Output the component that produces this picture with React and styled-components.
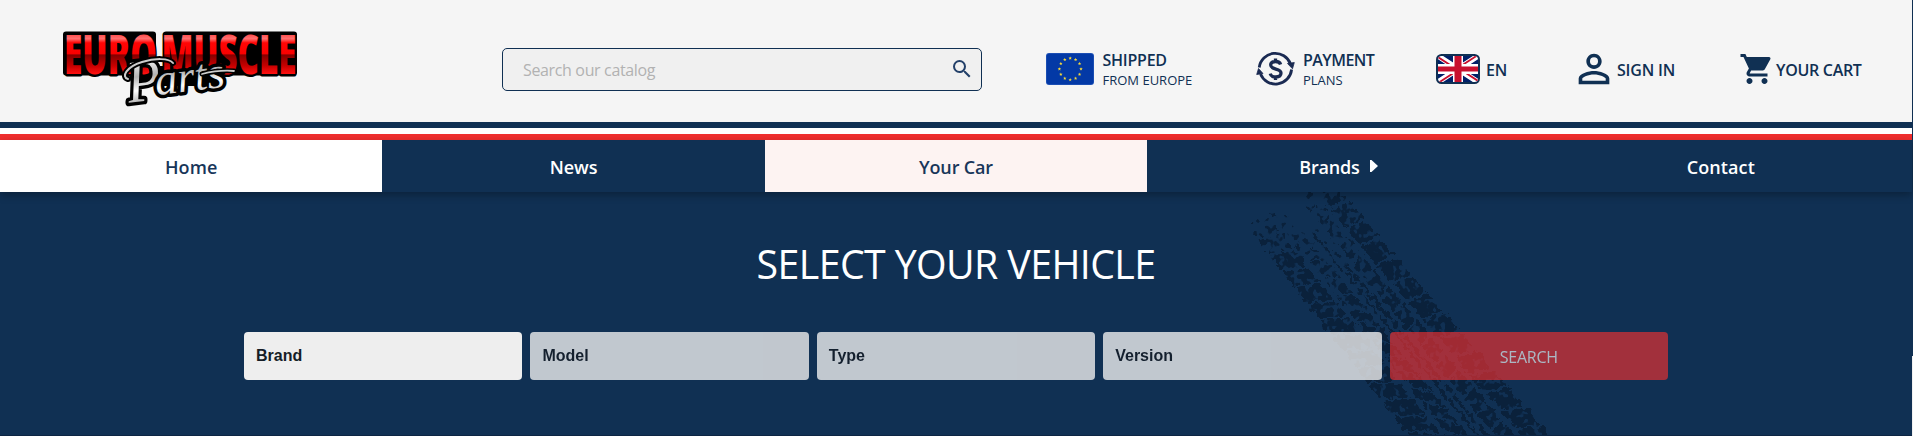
import React from 'react';
import styled, { createGlobalStyle } from 'styled-components';
import { MdSearch, MdPersonOutline, MdShoppingCart } from 'react-icons/md';

const NAVY = '#103053';
const SANS = '"Open Sans", "Noto Sans", sans-serif';

const Global = createGlobalStyle`
  * { box-sizing: border-box; }
  body { margin: 0; background: ${NAVY}; font-family: ${SANS}; overflow: hidden; }
`;

const Screen = styled.div`
  display: flex;
  width: 1913px;
  height: 436px;
`;
const Page = styled.div`
  width: 1912px;
  display: flex;
  flex-direction: column;
`;
const ScrollRail = styled.div`
  width: 1px;
  background: linear-gradient(${NAVY} 356px, #f0f0f0 356px);
`;

const Header = styled.header`
  height: 122px;
  padding-top: 16px;
  background: #f5f5f5;
  display: flex;
  align-items: center;
`;
const Logo = styled.svg`
  width: 240px;
  height: 84px;
  margin-left: 60px;
`;
const LogoWord = styled.text`
  font: 800 54px "Open Sans", sans-serif;
  fill: url(#red);
  stroke: #000;
  stroke-width: 5px;
  stroke-linejoin: round;
  paint-order: stroke;
`;
const LogoScript = styled.text`
  font: italic 400 ${p => p.$size}px "Liberation Serif", serif;
  fill: url(#silver);
  stroke: #000;
  stroke-width: 7px;
  stroke-linejoin: round;
  paint-order: stroke;
`;
const SearchBox = styled.label`
  width: 480px;
  height: 43px;
  margin: 1px 64px 0 202px;
  padding: 0 7px 0 20px;
  border: 1px solid ${NAVY};
  border-radius: 5px;
  background: #f0f0f0;
  color: #234069;
  display: flex;
  align-items: center;
  svg { margin-top: -2px; }
`;
const SearchInput = styled.input`
  flex: 1;
  padding: 0;
  border: 0;
  outline: 0;
  background: none;
  font: 400 16px/22px ${SANS};
  letter-spacing: -0.35px;
  &::placeholder { color: #b2b2b2; opacity: 1; }
`;
const HeaderItem = styled.div`
  display: flex;
  align-items: center;
  width: ${p => p.$width}px;
  gap: ${p => p.$gap}px;
  color: ${NAVY};
  flex: none;
`;
const Lines = styled.div`
  display: flex;
  flex-direction: column;
  padding-top: 1px;
`;
const Strong = styled.span`
  padding-top: ${p => p.$drop || 0}px;
  font-size: 16px;
  line-height: 21px;
  font-weight: 600;
  letter-spacing: ${p => p.$track || 0}px;
  white-space: nowrap;
`;
const Small = styled.span`
  font-size: 13px;
  line-height: 19px;
  letter-spacing: ${p => p.$track || 0}px;
  white-space: nowrap;
`;

const Stripe = styled.div`
  height: 6px;
  background: ${p => p.$color};
`;
const Nav = styled.nav`
  height: 52px;
  display: grid;
  grid-template-columns: repeat(5, 1fr);
  background: ${NAVY};
  position: relative;
  z-index: 1;
  box-shadow: 0 3px 8px rgba(0, 0, 0, 0.3);
`;
const NavLink = styled.a`
  display: flex;
  align-items: center;
  justify-content: center;
  gap: 10px;
  padding-top: 1px;
  font-size: 18px;
  font-weight: 600;
  letter-spacing: ${p => p.$track}px;
  color: ${p => (p.$bg ? '#183659' : '#fff')};
  background: ${p => p.$bg || 'transparent'};
  svg { margin-top: -2px; }
`;

const Hero = styled.section`
  position: relative;
  flex: 1;
  display: flex;
  flex-direction: column;
  align-items: center;
  overflow: hidden;
  background: ${NAVY};
  border-bottom: 1px solid #0d2543;
`;
const TreadArt = styled.svg`
  position: absolute;
  left: 1220px;
  top: 0;
  width: 380px;
  height: 244px;
`;
const Title = styled.h1`
  position: relative;
  margin: 45px 0 41px;
  font-size: 39.3px;
  line-height: 54px;
  font-weight: 400;
  letter-spacing: -0.6px;
  color: #fff;
`;
const VehicleForm = styled.form`
  position: relative;
  width: 1424px;
  display: grid;
  grid-template-columns: repeat(5, 1fr);
  gap: 8px;
`;
const Select = styled.div`
  height: 48px;
  padding-left: 12px;
  border-radius: 4px;
  background: #eee;
  color: #161d26;
  opacity: ${p => (p.$disabled ? 0.8 : 1)};
  display: flex;
  align-items: center;
  font: 700 16px "Liberation Sans", Arial, sans-serif;
`;
const SearchButton = styled.button`
  height: 48px;
  padding: 2px 0 0;
  border: 0;
  border-radius: 4px;
  background: #f03030;
  color: #fff;
  opacity: 0.65;
  font: 400 16px ${SANS};
  letter-spacing: -0.25px;
`;

function BrandLogo() {
  return (
    <Logo viewBox="60 27 240 84" role="img">
      <defs>
        <linearGradient id="red" gradientUnits="userSpaceOnUse" x1="0" y1="33" x2="0" y2="74">
          <stop offset="0" stopColor="#ff4040" />
          <stop offset="0.14" stopColor="#ff7070" />
          <stop offset="0.24" stopColor="#ff0505" />
          <stop offset="0.5" stopColor="#fa0000" />
          <stop offset="0.54" stopColor="#850000" />
          <stop offset="0.8" stopColor="#c80000" />
          <stop offset="1" stopColor="#ff1010" />
        </linearGradient>
        <linearGradient id="silver" gradientUnits="userSpaceOnUse" x1="0" y1="60" x2="0" y2="106">
          <stop offset="0" stopColor="#fff" />
          <stop offset="0.4" stopColor="#b4b4b4" />
          <stop offset="0.7" stopColor="#fff" />
          <stop offset="1" stopColor="#aaa" />
        </linearGradient>
      </defs>
      <rect x="63" y="31.500" width="93" height="44" rx="3" />
      <rect x="163" y="31.500" width="134" height="44" rx="3" />
      <rect x="130" y="66" width="90" height="20" rx="8" />
      <LogoWord x="64" y="73.500" textLength="93" lengthAdjust="spacingAndGlyphs">EURO</LogoWord>
      <LogoWord x="161.500" y="73.500" textLength="135" lengthAdjust="spacingAndGlyphs">MUSCLE</LogoWord>
      <g transform="rotate(-7 126 102)">
        <LogoScript $size={60} x="129" y="103" textLength="34" lengthAdjust="spacingAndGlyphs">P</LogoScript>
        <LogoScript $size={44} x="157" y="99" textLength="70" lengthAdjust="spacingAndGlyphs">arts</LogoScript>
      </g>
      <path d="M128 79c-7-2-2-12 14-17 13-4 27-4 31 1" fill="none" stroke="#000" strokeWidth="6" strokeLinecap="round" />
      <path d="M128 79c-7-2-2-12 14-17 13-4 27-4 31 1" fill="none" stroke="#ccc" strokeWidth="2" strokeLinecap="round" />
      <path d="M202 74c8-2 20-4 32-3" fill="none" stroke="#000" strokeWidth="5" strokeLinecap="round" />
      <path d="M202 74c8-2 20-4 32-3" fill="none" stroke="#ccc" strokeWidth="1.800" strokeLinecap="round" />
    </Logo>
  );
}

function EuFlag() {
  const stars = Array.from({ length: 12 }, (_, i) => {
    const a = (i * Math.PI) / 6;
    const cx = 24.2 + 10.8 * Math.sin(a);
    const cy = 16 - 10.8 * Math.cos(a);
    return Array.from({ length: 10 }, (_, k) => {
      const r = k % 2 ? 0.8 : 1.8;
      const b = (k * Math.PI) / 5;
      return `${(cx + r * Math.sin(b)).toFixed(2)},${(cy - r * Math.cos(b)).toFixed(2)}`;
    }).join(' ');
  });
  return (
    <svg width="48" height="32" viewBox="0 0 48 32">
      <rect width="48" height="32" rx="3" fill="#2456b8" />
      <rect x="0.700" y="0.700" width="46.600" height="30.600" rx="2.500" fill="#0339a6" />
      {stars.map((pts, i) => <polygon key={i} points={pts} fill="#f5d93a" />)}
    </svg>
  );
}

function UkFlag() {
  return (
    <svg width="44" height="30" viewBox="0 0 44 30">
      <defs>
        <clipPath id="ukFrame"><rect x="2" y="2" width="40" height="26" rx="3.500" /></clipPath>
        <clipPath id="ukRed"><path d="M22 15h20v13zM22 15v13H2zM22 15H2V2zM22 15V2h20z" /></clipPath>
      </defs>
      <rect width="44" height="30" rx="5.500" fill={NAVY} />
      <g clipPath="url(#ukFrame)">
        <rect x="2" y="2" width="40" height="26" fill="#012169" />
        <path d="M2 2l40 26M42 2L2 28" stroke="#fff" strokeWidth="5.600" />
        <path d="M2 2l40 26M42 2L2 28" clipPath="url(#ukRed)" stroke="#c8102e" strokeWidth="3.600" />
        <path d="M22 2v26M2 15h40" stroke="#fff" strokeWidth="10" />
        <path d="M22 2v26" stroke="#c8102e" strokeWidth="7" />
        <path d="M2 15h40" stroke="#c8102e" strokeWidth="4.800" />
      </g>
    </svg>
  );
}

function PaymentIcon() {
  return (
    <svg width="39" height="36" viewBox="0 0 39 36" fill="none" stroke="#1a2a52">
      <path d="M3.200 16.500A16.200 16.200 0 0 1 34.500 13" strokeWidth="2.800" />
      <path d="M35.600 18.500A16.200 16.200 0 0 1 4.500 23" strokeWidth="2.800" />
      <path d="M31.500 12.500l6.800-1-1.800 6.300zM7 22.500l-6.300 1 1.800-6z" fill="#1a2a52" strokeWidth="0.800" />
      <path d="M24.600 13.500c-.6-2-2.300-3-5-3-3 0-4.900 1.300-4.900 3.600 0 5.300 10.300 2.600 10.300 8 0 2.500-2.100 3.900-5.200 3.900-3 0-5-1.200-5.600-3.400M19.500 7.500v3M19.500 26v3" strokeWidth="3.300" />
    </svg>
  );
}

/* Tyre track: tapered bands of blocks, worn away by noise towards the top. */
const L0 = [25, 32], L1 = [198, 256], R0 = [114, -8], R1 = [341, 256];
const point = (t, v) => {
  const lx = L0[0] + (L1[0] - L0[0]) * t, ly = L0[1] + (L1[1] - L0[1]) * t;
  const rx = R0[0] + (R1[0] - R0[0]) * t, ry = R0[1] + (R1[1] - R0[1]) * t;
  return `${(lx + (rx - lx) * v).toFixed(1)},${(ly + (ry - ly) * v).toFixed(1)}`;
};
const quad = (t0, t1, v0, v1, skew) =>
  `M${point(t0, v0)}L${point(t1, v0)}L${point(t1 + skew, v1)}L${point(t0 + skew, v1)}Z`;
const band = (v0, v1, count, fill, skew) =>
  Array.from({ length: count }, (_, i) => quad(i / count, (i + fill) / count, v0, v1, skew)).join('');

const shoulders = band(0, 0.24, 14, 0.91, 0.01) + band(0.79, 1, 14, 0.91, -0.01);
const blocks = band(0.28, 0.43, 15, 0.88, 0.045) + band(0.61, 0.75, 15, 0.88, -0.04);
const grooves = quad(0.1, 1, 0.475, 0.505, 0) + quad(0.1, 1, 0.53, 0.57, 0);

function Tread() {
  return (
    <TreadArt viewBox="0 0 380 244">
      <defs>
        <linearGradient id="wearEdge" gradientUnits="userSpaceOnUse" x1="60" y1="10" x2="230" y2="210">
          <stop offset="0" stopOpacity="0.670" />
          <stop offset="0.2" stopOpacity="0.960" />
          <stop offset="0.7" stopOpacity="1" />
        </linearGradient>
        <linearGradient id="wearMid" gradientUnits="userSpaceOnUse" x1="60" y1="10" x2="230" y2="210">
          <stop offset="0" stopOpacity="0.690" />
          <stop offset="0.3" stopOpacity="0.840" />
          <stop offset="0.6" stopOpacity="0.980" />
          <stop offset="1" stopOpacity="1" />
        </linearGradient>
        <filter id="erode" filterUnits="userSpaceOnUse" x="0" y="0" width="380" height="244" colorInterpolationFilters="sRGB">
          <feTurbulence type="fractalNoise" baseFrequency="0.15" numOctaves="2" seed="7" result="noise" />
          <feDisplacementMap in="SourceGraphic" in2="noise" scale="9" xChannelSelector="R" yChannelSelector="G" result="rough" />
          <feComposite in="rough" in2="noise" operator="arithmetic" k1="0" k2="0.8" k3="1" k4="-0.85" result="sum" />
          <feComponentTransfer in="sum" result="mask"><feFuncA type="linear" slope="12" intercept="-3.500" /></feComponentTransfer>
          <feFlood floodColor="#0a213b" />
          <feComposite operator="in" in2="mask" />
        </filter>
      </defs>
      <g filter="url(#erode)">
        <path d={shoulders} fill="url(#wearEdge)" />
        <path d={blocks + grooves} fill="url(#wearMid)" />
      </g>
    </TreadArt>
  );
}

export default function App() {
  return (
    <Screen>
      <Global />
      <Page>
        <Header>
          <BrandLogo />
          <SearchBox>
            <SearchInput placeholder="Search our catalog" />
            <MdSearch size={24} />
          </SearchBox>
          <HeaderItem $width={210} $gap={8.5}>
            <EuFlag />
            <Lines><Strong $track={-0.25}>SHIPPED</Strong><Small>FROM EUROPE</Small></Lines>
          </HeaderItem>
          <HeaderItem $width={180} $gap={8}>
            <PaymentIcon />
            <Lines><Strong $track={-0.55}>PAYMENT</Strong><Small>PLANS</Small></Lines>
          </HeaderItem>
          <HeaderItem $width={135} $gap={6}><UkFlag /><Strong $drop={2} $track={-0.2}>EN</Strong></HeaderItem>
          <HeaderItem $width={168} $gap={0}><MdPersonOutline size={46} /><Strong $drop={2} $track={-0.2}>SIGN IN</Strong></HeaderItem>
          <HeaderItem $width={140} $gap={1}><MdShoppingCart size={36} /><Strong $drop={2} $track={-0.3}>YOUR CART</Strong></HeaderItem>
        </Header>
        <Stripe $color={NAVY} />
        <Stripe $color="#fff" />
        <Stripe $color="#f02f2f" />
        <Nav>
          <NavLink $bg="#fff" $track={0.1}>Home</NavLink>
          <NavLink $track={0}>News</NavLink>
          <NavLink $bg="#fdf3f2" $track={-0.15}>Your Car</NavLink>
          <NavLink $track={-0.2}>
            Brands
            <svg width="8" height="12" viewBox="0 0 8 12"><path d="M0 0h1.500L8 6l-6.500 6H0z" fill="#fff" /></svg>
          </NavLink>
          <NavLink $track={0.1}>Contact</NavLink>
        </Nav>
        <Hero>
          <Tread />
          <Title>SELECT YOUR VEHICLE</Title>
          <VehicleForm>
            <Select>Brand</Select>
            <Select $disabled>Model</Select>
            <Select $disabled>Type</Select>
            <Select $disabled>Version</Select>
            <SearchButton type="button">SEARCH</SearchButton>
          </VehicleForm>
        </Hero>
      </Page>
      <ScrollRail />
    </Screen>
  );
}
